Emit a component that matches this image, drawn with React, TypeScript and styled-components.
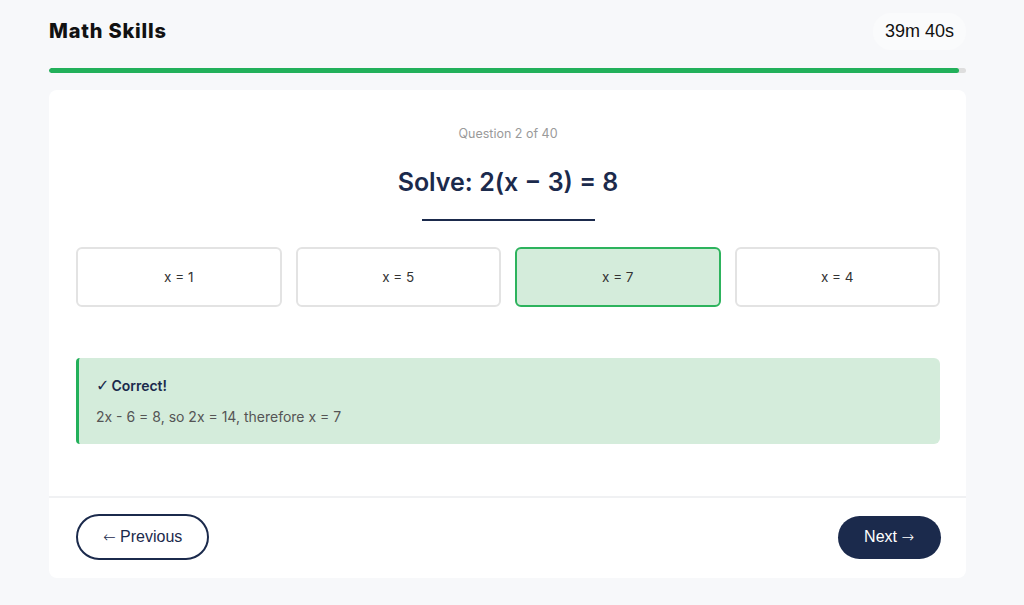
import React from 'react';
import styled, { createGlobalStyle } from 'styled-components';

const Global = createGlobalStyle`
  html, body {
    margin: 0;
    padding: 0;
    background: #f7f8fa;
    font-family: Inter, "Liberation Sans", sans-serif;
  }
`;

const Page = styled.div`
  width: 917px;
  margin: 0 auto 0 49px;
  padding-top: 12px;
`;

const Header = styled.div`
  display: flex;
  align-items: center;
  justify-content: space-between;
  height: 38px;
`;

const Title = styled.h1`
  margin: 0;
  font-family: Inter, sans-serif;
  font-size: 20px;
  font-weight: 800;
  letter-spacing: 0.8px;
  color: #111;
`;

const Timer = styled.div`
  font-family: "Liberation Sans", Arial, sans-serif;
  font-size: 18px;
  color: #111;
  background: #fafbfc;
  border-radius: 18px;
  padding: 8px 12px;
`;

const Track = styled.div`
  margin-top: 18px;
  height: 5px;
  border-radius: 3px;
  background: #dedede;
  overflow: hidden;
`;

const Fill = styled.div`
  height: 100%;
  background: #22b05a;
  border-radius: 3px;
`;

const Card = styled.div`
  margin-top: 17px;
  background: #fff;
  border-radius: 8px;
  overflow: hidden;
`;

const Body = styled.div`
  padding: 36px 26px 52px 27px;
  display: flex;
  flex-direction: column;
  align-items: center;
`;

const Counter = styled.div`
  font-size: 12.5px;
  color: #9a9a9a;
  line-height: 16px;
`;

const Question = styled.h2`
  margin: 25px 0 0;
  font-size: 25px;
  font-weight: 600;
  color: #1b2a4c;
  line-height: 30px;
`;

const Rule = styled.div`
  margin-top: 22px;
  width: 173px;
  height: 2px;
  background: #1b2a4c;
`;

const Options = styled.div`
  margin-top: 26px;
  width: 100%;
  display: grid;
  grid-template-columns: repeat(4, 1fr);
  gap: 14px;
`;

const Option = styled.button<{ $selected?: boolean }>`
  height: 60px;
  border-radius: 6px;
  border: 2px solid ${p => (p.$selected ? '#2db35d' : '#e3e3e3')};
  background: ${p => (p.$selected ? '#d4ecdb' : '#fff')};
  font-family: Inter, sans-serif;
  font-size: 13.5px;
  color: #333;
  cursor: pointer;
`;

const Feedback = styled.div`
  margin-top: 51px;
  width: 100%;
  box-sizing: border-box;
  height: 86px;
  background: #d4ecdb;
  border-left: 3px solid #22b05a;
  border-radius: 4px 6px 6px 4px;
  padding: 19px 17px;
`;

const FeedbackTitle = styled.div`
  font-size: 14px;
  font-weight: 600;
  color: #1b2a4c;
  line-height: 18px;
`;

const Check = styled.span`
  font-family: "DejaVu Sans", sans-serif;
  font-size: 16px;
  font-weight: 400;
  margin-right: 2px;
`;

const FeedbackText = styled.div`
  margin-top: 13px;
  font-size: 14px;
  color: #555;
  line-height: 18px;
`;

const Footer = styled.div`
  border-top: 2px solid #f0f1f3;
  padding: 16px 25px 18px 27px;
  display: flex;
  align-items: center;
  justify-content: space-between;
`;

const NavButton = styled.button<{ $primary?: boolean }>`
  font-family: "Liberation Sans", Arial, sans-serif;
  font-size: 16px;
  border-radius: 24px;
  cursor: pointer;
  ${p =>
    p.$primary
      ? `
    background: #1b2a4c;
    color: #fff;
    border: none;
    height: 43px;
    padding: 0 27px 0 26px;
    font-weight: 500;
  `
      : `
    background: #fff;
    color: #1b2a4c;
    border: 2px solid #1b2a4c;
    height: 46px;
    padding: 0 25px;
  `}
`;

const Arrow = styled.span`
  font-family: "DejaVu Sans", sans-serif;
  font-size: 15px;
  font-weight: 300;
`;

const options = ['x = 1', 'x = 5', 'x = 7', 'x = 4'];

export default function App() {
  const progress = 99.2;
  return (
    <>
      <Global />
      <Page>
        <Header>
          <Title>Math Skills</Title>
          <Timer>39m 40s</Timer>
        </Header>
        <Track>
          <Fill style={{ width: `${progress}%` }} />
        </Track>
        <Card>
          <Body>
            <Counter>Question 2 of 40</Counter>
            <Question>Solve: 2(x − 3) = 8</Question>
            <Rule />
            <Options>
              {options.map(o => (
                <Option key={o} $selected={o === 'x = 7'}>
                  {o}
                </Option>
              ))}
            </Options>
            <Feedback>
              <FeedbackTitle>
                <Check>✓</Check>Correct!
              </FeedbackTitle>
              <FeedbackText>2x - 6 = 8, so 2x = 14, therefore x = 7</FeedbackText>
            </Feedback>
          </Body>
          <Footer>
            <NavButton>
              <Arrow>←</Arrow> Previous
            </NavButton>
            <NavButton $primary>
              Next <Arrow>→</Arrow>
            </NavButton>
          </Footer>
        </Card>
      </Page>
    </>
  );
}
